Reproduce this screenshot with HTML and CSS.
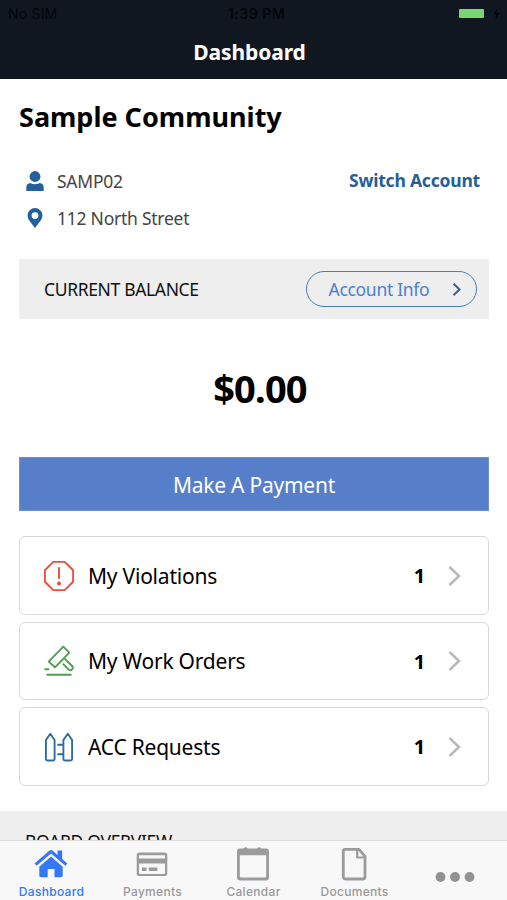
FILE: index.html
```html
<!DOCTYPE html>
<html lang="en">
<head>
<meta charset="utf-8">
<title>Dashboard</title>
<link rel="stylesheet" href="styles.css">
</head>
<body>
<div class="app">
  <header class="header">
    <div class="status">
      <span class="carrier">No SIM</span>
      <span class="clock">1:39 PM</span>
      <span class="power"><i class="battery"></i>
        <svg width="7" height="10" viewBox="0 0 7 10"><path d="M4 0 .3 5.5H3L2.6 10 6.7 4H4z" fill="#03060b"/></svg>
      </span>
    </div>
    <h1 class="title"><span>Dashboard</span></h1>
  </header>
  <main class="content">
    <h2 class="community"><span>Sample Community</span></h2>
    <section class="account">
      <div class="details">
        <div class="detail">
          <svg width="18" height="20" viewBox="0 0 18 20" fill="#235f99"><circle cx="9" cy="5.500" r="5.400"/><path d="M.3 20v-3.200c0-3.200 1.700-4.200 3.900-4.700 2.700 1.600 6.900 1.600 9.600 0 2.200.5 3.900 1.500 3.900 4.700V20z"/></svg>
          <span>SAMP02</span>
        </div>
        <div class="detail">
          <svg width="18" height="20" viewBox="0 0 18 20"><path d="M9 0a7.400 7.400 0 0 0-7.400 7.400C1.600 12 5.500 14.500 9 20c3.500-5.500 7.400-8 7.400-12.600A7.400 7.400 0 0 0 9 0zm0 4.200a3.400 3.400 0 1 1 0 6.800 3.400 3.400 0 0 1 0-6.800z" fill="#235f99" fill-rule="evenodd"/></svg>
          <span>112 North Street</span>
        </div>
      </div>
      <a class="switch">Switch Account</a>
    </section>
    <section class="balance">
      <span class="balance-label">CURRENT BALANCE</span>
      <a class="info"><span>Account Info</span>
        <svg width="10" height="14" viewBox="0 0 10 14"><path d="M1.500 1.800 7.500 7.500 1.500 13.200" fill="none" stroke="#336291" stroke-width="2"/></svg>
      </a>
    </section>
    <div class="amount"><span>$0.00</span></div>
    <button class="pay"><span>Make A Payment</span></button>
    <nav class="cards">
      <a class="card">
        <svg class="icon" width="32" height="32" viewBox="0 0 32 32" fill="none" stroke="#e5513d" stroke-width="1.900"><path d="M10.300 1.900h11.400l8.400 8.300v11.600l-8.400 8.300H10.300l-8.400-8.300V10.200z"/><path d="M16 7.300v11.500"/><circle cx="16" cy="23.500" r="2" fill="#e5513d" stroke="none"/></svg>
        <span class="card-label">My Violations</span><b>1</b>
        <svg width="14" height="20" viewBox="0 0 14 20"><path d="M1.500 1 11 10 1.500 19" fill="none" stroke="#b9b9b9" stroke-width="2.500"/></svg>
      </a>
      <a class="card">
        <svg class="icon" width="32" height="32" viewBox="0 0 32 32" fill="none" stroke="#519c51" stroke-width="1.900" stroke-linejoin="round"><path d="M20.300 1.700 26.300 7.700 12 22.300 5.700 16.600z"/><path d="M21.500 13.600 29.300 21.200c1 1 .5 2.300-.3 3.200-.9.900-2.200 1.200-3.200.2l-6-6" /><path d="M1.500 24.200h4.700M3.500 29.800h25"/></svg>
        <span class="card-label">My Work Orders</span><b>1</b>
        <svg width="14" height="20" viewBox="0 0 14 20"><path d="M1.500 1 11 10 1.500 19" fill="none" stroke="#b9b9b9" stroke-width="2.500"/></svg>
      </a>
      <a class="card">
        <svg class="icon" width="32" height="32" viewBox="0 0 32 32" fill="none" stroke="#2d6ca2" stroke-width="1.900" stroke-linejoin="round"><path d="M2.900 9 7.300 2.800 11.600 9v19q0 1.500-1.500 1.500H4.400q-1.500 0-1.500-1.500zM20.400 9l4.400-6.200L29.100 9v19q0 1.500-1.500 1.500h-5.700q-1.500 0-1.500-1.500zM14.300 13.700h6M14.300 23.200h6"/></svg>
        <span class="card-label">ACC Requests</span><b>1</b>
        <svg width="14" height="20" viewBox="0 0 14 20"><path d="M1.500 1 11 10 1.500 19" fill="none" stroke="#b9b9b9" stroke-width="2.500"/></svg>
      </a>
    </nav>
    <section class="board"><span>BOARD OVERVIEW</span></section>
  </main>
  <footer class="tabs">
    <a class="tab active">
      <svg width="36" height="36" viewBox="0 0 36 36" fill="#3478f6"><path d="m1.600 17.500 14.600-12.700q1.800-1.500 3.600 0l4.700 4.100V4.500h4.700V13l5.200 4.500-2 2.300L18 7.500 3.600 19.800z"/><path d="m18 10.500 11.700 10.200v8.800q0 1.800-1.800 1.800h-6.400V23h-6.800v8.300H8.100q-1.800 0-1.800-1.800v-8.800z"/></svg>
      <span>Dashboard</span>
    </a>
    <a class="tab">
      <svg width="36" height="36" viewBox="0 0 36 36" fill="#9b9b9b"><path fill-rule="evenodd" d="M5.500 6.500h25q2.800 0 2.800 2.800v18q0 2.800-2.800 2.800h-25q-2.800 0-2.800-2.800v-18q0-2.800 2.800-2.800zM5 9.300v3.200h26V9.300zM5 17.500v9.300q0 1.200 1.200 1.200h23.600q1.200 0 1.200-1.200v-9.300z"/><path d="M8 21.500h4.500V25H8zM14.800 21.500h8.500V25h-8.500z"/></svg>
      <span>Payments</span>
    </a>
    <a class="tab">
      <svg width="36" height="36" viewBox="0 0 36 36" fill="#9b9b9b"><path fill-rule="evenodd" d="M5 2.500h3.500q2.200-2.500 4.500 0h9q2.200-2.500 4.500 0H31q3 0 3 3v26q0 3-3 3H5q-3 0-3-3v-26q0-3 3-3zM4.800 9.200v21q0 1.400 1.400 1.400h23.600q1.400 0 1.400-1.400v-21z"/></svg>
      <span>Calendar</span>
    </a>
    <a class="tab">
      <svg width="36" height="36" viewBox="0 0 36 36" fill="none" stroke="#9b9b9b" stroke-width="2.800" stroke-linejoin="round"><path d="M9 3.300h14l6 7v20.400q0 2.300-2.300 2.300H9.300Q7.300 33 7.300 30.700V5q0-1.700 1.700-1.700z"/><path d="M21.200 4v7.500h7.300" stroke-width="2.200"/></svg>
      <span>Documents</span>
    </a>
    <a class="tab more">
      <svg width="40" height="10" viewBox="0 0 40 10" fill="#929292"><circle cx="5.500" cy="5" r="4.900"/><circle cx="20" cy="5" r="4.900"/><circle cx="34.500" cy="5" r="4.900"/></svg>
    </a>
  </footer>
</div>
</body>
</html>
```

FILE: styles.css
```css
* { box-sizing: border-box; }
body { margin: 0; background: #fff; color: #000; font-family: "Noto Sans", sans-serif; }
h1, h2 { margin: 0; }
svg { display: block; flex: none; }
.app { height: 900px; display: flex; flex-direction: column; overflow: hidden; white-space: nowrap; }

.header { height: 79px; flex: none; background: #101721; }
.status { height: 27px; padding: 0 7px 0 8px; display: grid; grid-template-columns: 1fr auto 1fr; align-items: center; color: #03060b; font: 14px/27px Inter, sans-serif; letter-spacing: .2px; }
.clock { font-weight: 600; letter-spacing: .5px; margin-left: 5px; }
.power { display: flex; justify-content: flex-end; align-items: center; gap: 9px; }
.battery { width: 25px; height: 9px; border-radius: 1px; background: #77d572; }
.title { color: #fff; font-size: 21px; line-height: 51px; letter-spacing: -.1px; text-align: center; padding-right: 8px; }

.content { flex: 1; min-height: 0; overflow: hidden; }
.community { margin: 19px 19px 0; font-size: 27px; line-height: 38px; }
.account { display: flex; justify-content: space-between; margin: 26px 27px 0 26px; height: 76px; }
.detail { display: flex; align-items: center; gap: 13px; height: 37px; font-size: 17.500px; letter-spacing: -.25px; color: #444; }
.detail span { padding-top: 1px; }
.switch { font-weight: 700; font-size: 17.500px; line-height: 37px; letter-spacing: -.2px; color: #235f99; }
.balance { margin: 21px 18px 0 19px; height: 60px; padding: 0 12.500px 0 25px; display: flex; align-items: center; justify-content: space-between; background: #eee; }
.balance-label { font-size: 17.500px; letter-spacing: -.35px; color: #111; }
.info { width: 171px; height: 36px; border: 1.500px solid #4380b5; border-radius: 18px; display: flex; align-items: center; justify-content: space-between; padding: 0 14px 0 22px; color: #4c80d0; font-size: 17.500px; letter-spacing: -.3px; }
.amount { margin-top: 42px; height: 54px; text-align: center; font-size: 38px; line-height: 54px; font-weight: 700; letter-spacing: -.8px; padding-left: 13px; }
.pay { display: block; width: 470px; height: 54px; margin: 42px 0 0 19px; padding: 1px 0 0; border: 1px solid #6b8fd2; background: #567ec9; color: #fff; font-family: inherit; font-size: 21px; letter-spacing: -.25px; }
.cards { margin: 25px 18px 0 19px; display: flex; flex-direction: column; gap: 7px; }
.card { height: 78.600px; border: 1.500px solid #d8d8d8; border-radius: 6px; display: flex; align-items: center; padding: 1px 26px 0 23px; font-size: 21px; letter-spacing: -.22px; }
.card-label { flex: 1; margin-left: 13px; }
.card b { margin-right: 23px; font-size: 20px; }
.board { margin-top: 25px; height: 60px; background: #eee; padding-left: 25px; font-size: 17.500px; line-height: 60px; letter-spacing: -.3px; color: #111; }

.tabs { height: 60px; flex: none; border-top: 1px solid #ddd; background: #f8f8f8; display: flex; padding-left: 1px; color: #999; font: 500 12px/15px Inter, sans-serif; }
.tab { width: 101px; padding-top: 5px; display: flex; flex-direction: column; align-items: center; gap: 2px; letter-spacing: .3px; }
.tab svg { margin-right: 1px; }
.active { color: #3478f6; }
.more { padding-top: 31px; }
```
